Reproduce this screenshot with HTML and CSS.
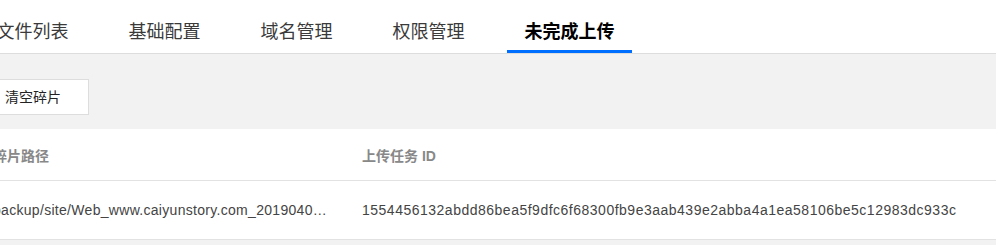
FILE: index.html
```html
<!DOCTYPE html>
<html lang="zh-CN">
<head>
<meta charset="utf-8">
<title>未完成上传</title>
<link rel="stylesheet" href="styles.css">
</head>
<body>
<div class="page">
  <div class="tabs">
    <ul class="tab-list">
      <li class="tab">文件列表</li>
      <li class="tab">基础配置</li>
      <li class="tab">域名管理</li>
      <li class="tab">权限管理</li>
      <li class="tab is-active">未完成上传</li>
    </ul>
  </div>
  <div class="content">
    <div class="toolbar">
      <button class="btn" type="button">清空碎片</button>
    </div>
    <table class="grid">
      <colgroup>
        <col class="col-path">
        <col>
      </colgroup>
      <thead>
        <tr>
          <th>碎片路径</th>
          <th>上传任务 ID</th>
        </tr>
      </thead>
      <tbody>
        <tr>
          <td><div class="cell-text path">backup/site/Web_www.caiyunstory.com_20190405_151216.zip</div></td>
          <td><div class="cell-text">1554456132abdd86bea5f9dfc6f68300fb9e3aab439e2abba4a1ea58106be5c12983dc933c</div></td>
        </tr>
      </tbody>
    </table>
  </div>
</div>
</body>
</html>
```
FILE: styles.css
```css
html, body {
  margin: 0;
  padding: 0;
  background: #f2f2f2;
  overflow: hidden;
}

body {
  font-family: "Liberation Sans", "Noto Sans CJK SC", sans-serif;
  color: #333;
}

.page {
  margin-left: -23px;
}

.tabs {
  background: #fff;
  border-bottom: 1px solid #dddddd;
}

.tab-list {
  list-style: none;
  margin: 0;
  padding: 14px 0 0 2px;
  display: flex;
  gap: 25px;
}

.tab {
  padding: 0 17.5px;
  line-height: 36px;
  height: 36px;
  font-size: 18px;
  color: #3a3a3a;
  border-bottom: 3px solid transparent;
  white-space: nowrap;
}

.tab.is-active {
  color: #000;
  font-weight: bold;
  border-bottom-color: #006eff;
}

.content {
  background: #f2f2f2;
  padding-top: 25px;
}

.toolbar {
  display: flex;
  margin-bottom: 14px;
}

.btn {
  height: 36px;
  padding: 0 27px;
  border: 1px solid #dddddd;
  background: #fff;
  font-family: "Liberation Sans", "Noto Sans CJK SC", sans-serif;
  font-size: 14px;
  color: #222;
  line-height: 34px;
}

.grid {
  width: 100%;
  table-layout: fixed;
  border-collapse: collapse;
  background: #fff;
}

.col-path {
  width: 369px;
}

.grid th {
  height: 51px;
  padding: 0 16px;
  text-align: left;
  font-size: 14px;
  font-weight: bold;
  color: #888;
  border-bottom: 1px solid #e2e2e2;
  white-space: nowrap;
}

.grid td {
  height: 58px;
  padding: 0 16px;
  font-size: 14px;
  letter-spacing: 0.5px;
  color: #444;
  border-bottom: 1px solid #e2e2e2;
}

.cell-text {
  white-space: nowrap;
  overflow: hidden;
  text-overflow: ellipsis;
}

.cell-text.path {
  letter-spacing: 0.3px;
}
```
